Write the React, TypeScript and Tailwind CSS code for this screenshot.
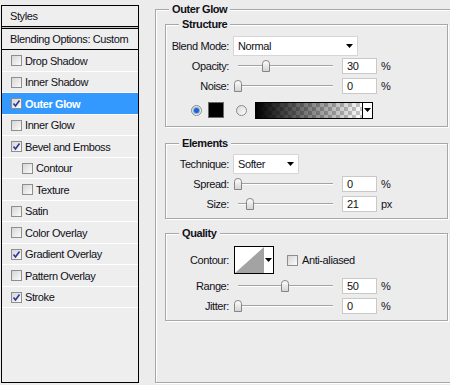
import type { ReactNode } from 'react';

const items = [
  { label: 'Drop Shadow', checked: false },
  { label: 'Inner Shadow', checked: false },
  { label: 'Outer Glow', checked: true, active: true },
  { label: 'Inner Glow', checked: false },
  { label: 'Bevel and Emboss', checked: true },
  { label: 'Contour', checked: false, indent: true },
  { label: 'Texture', checked: false, indent: true },
  { label: 'Satin', checked: false },
  { label: 'Color Overlay', checked: false },
  { label: 'Gradient Overlay', checked: true },
  { label: 'Pattern Overlay', checked: false },
  { label: 'Stroke', checked: true },
];

const Check = ({ checked }: { checked: boolean }) => (
  <span className="flex w-[11px] h-[11px] shrink-0 items-center justify-center border border-[#8e8e8e] bg-linear-to-br from-[#d6d6d6] to-[#fbfbfb]">
    {checked && (
      <svg width="9" height="9" viewBox="0 0 9 9">
        <path d="M1.5 4.5 L3.5 7 L7.5 1.5" fill="none" stroke="#2a3790" strokeWidth="1.6" />
      </svg>
    )}
  </span>
);

const Radio = ({ on }: { on: boolean }) => (
  <span className="flex w-[11px] h-[11px] shrink-0 items-center justify-center rounded-full border border-[#8a8a8a] bg-linear-to-br from-[#d8d8d8] to-[#fdfdfd]">
    {on && <span className="w-[5px] h-[5px] rounded-full bg-[#1f62c9] shadow-[0_0_0_1px_#7fb0ee]" />}
  </span>
);

const Arrow = () => (
  <svg width="7" height="4" viewBox="0 0 7 4">
    <path d="M0 0 H7 L3.5 4 Z" fill="#000" />
  </svg>
);

const Slider = ({ at }: { at: number }) => (
  <div className="relative ml-[6px] w-[98px] h-[12px] shrink-0">
    <div className="ml-[3px] mt-[5px] w-[95px] h-[2px] border-t border-[#a3a3a3] bg-white" />
    <svg className="absolute top-[0px]" style={{ left: at - 4 }} width="8" height="12" viewBox="0 0 8 12">
      <defs>
        <linearGradient id="th" x1="0" x2="0" y1="0" y2="1">
          <stop offset="0" stopColor="#ffffff" />
          <stop offset="1" stopColor="#d2d2d2" />
        </linearGradient>
      </defs>
      <path d="M0.5 3.5 Q0.5 0.5 4 0.5 Q7.5 0.5 7.5 3.5 V11.5 H0.5 Z" fill="url(#th)" stroke="#858585" />
    </svg>
  </div>
);

const Num = ({ v, unit }: { v: string; unit: string }) => (
  <>
    <div className="ml-[9px] flex w-[35px] h-[16px] items-center border border-[#c9c9c9] bg-white pl-[4px] text-[#111]">{v}</div>
    <span className="ml-[4px]">{unit}</span>
  </>
);

const Label = ({ children }: { children: ReactNode }) => (
  <span className="w-[63px] shrink-0 text-right">{children}</span>
);

const Title = ({ children }: { children: ReactNode }) => (
  <div className="ml-[13px] -mt-[8px] w-fit bg-[#ececec] px-[3px] font-bold">{children}</div>
);

const SliderRow = ({ label, at, v, unit }: { label: string; at: number; v: string; unit: string }) => (
  <div className="flex h-[20px] items-center">
    <Label>{label}</Label>
    <Slider at={at} />
    <Num v={v} unit={unit} />
  </div>
);

const Box = 'border border-[#a7a7a7] shadow-[inset_1px_1px_0_#fff,1px_1px_0_#fff]';

export default function App() {
  return (
    <div className="flex w-[450px] h-[385px] items-start overflow-hidden bg-[#ececec] font-['Liberation_Sans',Arial,sans-serif] text-[11px] leading-[14px] tracking-[-0.4px] text-[#101018]">
      {/* styles list */}
      <div className="ml-[1px] mt-[5px] flex w-[138px] h-[378px] shrink-0 flex-col border border-black bg-[#eeeeee]">
        <div className="flex h-[21px] items-center border-b border-black pl-[8px]">Styles</div>
        <div className="h-[1px] bg-[#c4c4c4]" />
        <div className="flex h-[22px] items-center border-y border-black pl-[8px]">Blending Options: Custom</div>
        {items.map((it, i) => (
          <div
            key={it.label}
            className={
              'flex items-center gap-[3px] border-b border-white ' +
              (i % 2 === 0 ? 'h-[22px] ' : 'h-[21px] ') +
              (it.indent ? 'pl-[20px] ' : 'pl-[9px] ') +
              (it.active ? 'bg-[#3399ff] font-bold text-white' : '')
            }
          >
            <Check checked={it.checked} />
            <span>{it.label}</span>
          </div>
        ))}
      </div>

      {/* Outer Glow */}
      <div className={'ml-[16px] mt-[9px] w-[300px] h-[374px] shrink-0 border-r-0 ' + Box}>
        <Title>Outer Glow</Title>

        <div className={'ml-[9px] mt-[8px] w-[283px] h-[103px] ' + Box}>
          <Title>Structure</Title>
          <div className="mt-[5px] flex h-[20px] items-center">
            <Label>Blend Mode:</Label>
            <div className="ml-[4px] flex w-[125px] h-[20px] items-center justify-between border border-[#d6d6d6] bg-white pl-[4px] pr-[4px]">
              <span>Normal</span>
              <Arrow />
            </div>
          </div>
          <SliderRow label="Opacity:" at={31} v="30" unit="%" />
          <SliderRow label="Noise:" at={3} v="0" unit="%" />
          <div className="mt-[4px] flex h-[20px] items-center">
            <span className="ml-[25px]">
              <Radio on />
            </span>
            <span className="ml-[6px] w-[16px] h-[16px] border border-[#6a6a6a] bg-black" />
            <span className="ml-[12px]">
              <Radio on={false} />
            </span>
            <div className="ml-[8px] flex w-[118px] h-[17px] border border-black">
              <div className="flex-1 [background-image:linear-gradient(to_right,#000,rgba(0,0,0,0.25)_75%,rgba(0,0,0,0)),repeating-conic-gradient(#c8c8c8_0_25%,#ffffff_0_50%)] [background-size:100%_100%,8px_8px]" />
              <div className="flex w-[10px] items-center justify-center border-l border-black bg-white">
                <Arrow />
              </div>
            </div>
          </div>
        </div>

        <div className={'ml-[9px] mt-[16px] w-[283px] h-[76px] ' + Box}>
          <Title>Elements</Title>
          <div className="mt-[4px] flex h-[20px] items-center">
            <Label>Technique:</Label>
            <div className="ml-[4px] flex w-[66px] h-[20px] items-center justify-between border border-[#d6d6d6] bg-white pl-[4px] pr-[4px]">
              <span>Softer</span>
              <Arrow />
            </div>
          </div>
          <SliderRow label="Spread:" at={3} v="0" unit="%" />
          <SliderRow label="Size:" at={15} v="21" unit="px" />
        </div>

        <div className={'ml-[9px] mt-[14px] w-[283px] h-[88px] ' + Box}>
          <Title>Quality</Title>
          <div className="mt-[6px] flex h-[28px] items-center">
            <Label>Contour:</Label>
            <div className="ml-[5px] flex w-[40px] h-[28px] border border-black bg-white">
              <svg width="29" height="26" viewBox="0 0 29 26">
                <polygon points="0,26 29,0 29,26" fill="#a3a3a3" />
              </svg>
              <div className="flex flex-1 items-center justify-center">
                <Arrow />
              </div>
            </div>
            <span className="ml-[13px]">
              <Check checked={false} />
            </span>
            <span className="ml-[4px]">Anti-aliased</span>
          </div>
          <div className="mt-[2px]">
            <SliderRow label="Range:" at={50} v="50" unit="%" />
            <SliderRow label="Jitter:" at={3} v="0" unit="%" />
          </div>
        </div>
      </div>
    </div>
  );
}
